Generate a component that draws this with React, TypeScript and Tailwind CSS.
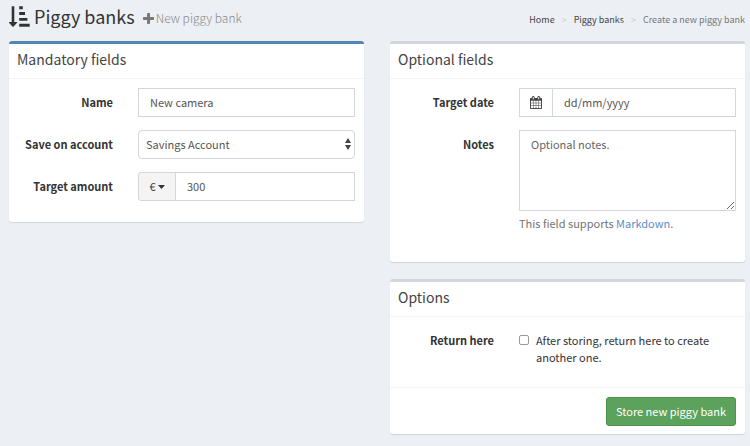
import type { ReactNode } from "react";

const control =
  "block h-[29px] w-full min-w-0 border border-[#d2d6de] bg-white px-[11px] pb-[2px] text-[11px] leading-4 text-[#555] outline-none placeholder:text-[#555]";

function Box({ title, accent, children }: { title: string; accent: string; children: ReactNode }) {
  return (
    <section className={`rounded-[3px] border-t-[3px] bg-white shadow-[0_1px_1px_rgba(0,0,0,0.12)] ${accent}`}>
      <h2 className="border-b border-[#f4f4f4] px-2 pt-[5px] pb-[9px] text-[14px] leading-5 text-[#444]">{title}</h2>
      {children}
    </section>
  );
}

function Row({ label, htmlFor, children }: { label: string; htmlFor: string; children: ReactNode }) {
  return (
    <div className="grid grid-cols-[95px_minmax(0,1fr)] gap-[25px]">
      <label htmlFor={htmlFor} className="pt-[6px] text-right text-[11px] leading-[17px] font-bold whitespace-nowrap text-[#333]">
        {label}
      </label>
      <div>{children}</div>
    </div>
  );
}

function SortIcon() {
  return (
    <svg viewBox="0 0 21 21" className="h-[21px] w-[21px] shrink-0 fill-[#333]" aria-hidden="true">
      <path d="M2.700 0.300h2.600v15.700h2.400q.9 0 .4.800L4.600 20.400q-.6.500-1.200 0L0 16.800q-.5-.8.4-.8H2.700z" />
      <path d="M10.200 0.300h3.600v2.900h-3.600zM10.200 6h5.800v2.900h-5.800zM10.200 11.900h8.200v2.900h-8.200zM10.200 17.800h10.500v2.900H10.200z" />
    </svg>
  );
}

function PlusIcon() {
  return (
    <svg viewBox="0 0 10 10" className="h-[11px] w-[11px] shrink-0 fill-[#777]" aria-hidden="true">
      <path d="M4.3 0h1.5q.6 0 .6.6v3h3q.6 0 .6.6v1.5q0 .6-.6.6h-3v3q0 .6-.6.6H4.3q-.6 0-.6-.6v-3h-3Q0 6.300 0 5.700V4.200q0-.6.7-.6h3v-3Q3.700 0 4.300 0z" />
    </svg>
  );
}

function CalendarIcon() {
  return (
    <svg viewBox="0 0 1664 1792" className="h-[13px] w-3 fill-[#444]" aria-hidden="true">
      <path d="M128 1664h288v-288h-288v288zm352 0h320v-288h-320v288zm-352-352h288v-320h-288v320zm352 0h320v-320h-320v320zm-352-384h288v-288h-288v288zm736 736h320v-288h-320v288zm-384-736h320v-288h-320v288zm768 736h288v-288h-288v288zm-384-352h320v-320h-320v320zm-352-864v-288q0-13-9.500-22.500t-22.500-9.500h-64q-13 0-22.500 9.500t-9.500 22.500v288q0 13 9.500 22.500t22.500 9.500h64q13 0 22.500-9.500t9.500-22.500zm736 864h288v-320h-288v320zm-384-384h320v-288h-320v288zm384 0h288v-288h-288v288zm32-480v-288q0-13-9.500-22.500t-22.500-9.500h-64q-13 0-22.500 9.500t-9.500 22.500v288q0 13 9.500 22.500t22.500 9.500h64q13 0 22.500-9.500t9.500-22.500zm384-64v1280q0 52-38 90t-90 38h-1408q-52 0-90-38t-38-90v-1280q0-52 38-90t90-38h128v-96q0-66 47-113t113-47h64q66 0 113 47t47 113v96h384v-96q0-66 47-113t113-47h64q66 0 113 47t47 113v96h128q52 0 90 38t38 90z" />
    </svg>
  );
}

export default function App() {
  return (
    <div className="min-h-screen bg-[#ecf0f5] pr-[5px] pb-3 pl-[9px] font-['Noto_Sans_CJK_SC','Noto_Sans',sans-serif] text-[11px] leading-[17px] text-[#333]">
      <header className="flex h-[41px] items-start justify-between">
        <div className="flex items-center pt-[2px]">
          <SortIcon />
          <h1 className="ml-1 text-[18px] leading-7">Piggy banks</h1>
          <span className="ml-2 flex items-center gap-[2px] pt-1">
            <PlusIcon />
            <small className="text-[12px] leading-5 font-light text-[#888]">New piggy bank</small>
          </span>
        </div>
        <nav aria-label="Breadcrumb" className="pt-3">
          <ol className="flex text-[9px] leading-4">
            <li><a href="#home" className="text-[#444]">Home</a></li>
            <li aria-hidden="true" className="px-[7px] text-[#ccc]">&gt;</li>
            <li><a href="#piggy-banks" className="text-[#444]">Piggy banks</a></li>
            <li aria-hidden="true" className="px-[7px] text-[#ccc]">&gt;</li>
            <li className="text-[#777]">Create a new piggy bank</li>
          </ol>
        </nav>
      </header>

      <form className="grid grid-cols-2 items-start gap-[26px]">
        <Box title="Mandatory fields" accent="border-[#5485b5]">
          <div className="flex flex-col gap-[13px] px-[9px] pt-[9px] pb-[21px]">
            <Row label="Name" htmlFor="name">
              <input id="name" type="text" defaultValue="New camera" className={control} />
            </Row>
            <Row label="Save on account" htmlFor="account">
              <div className="relative">
                <select id="account" className="block h-[29px] w-full appearance-none rounded-[4px] border border-[#d2d6de] bg-white px-[7px] pb-[2px] text-[11px] leading-4 text-[#555] outline-none">
                  <option>Savings Account</option>
                </select>
                <svg viewBox="0 0 6 12" className="pointer-events-none absolute top-2 right-1 h-3 w-[6px] fill-[#444]" aria-hidden="true">
                  <path d="M3 0l3 5H0zM3 12L0 7h6z" />
                </svg>
              </div>
            </Row>
            <Row label="Target amount" htmlFor="amount">
              <div className="flex">
                <button type="button" aria-label="Currency" className="-mr-px flex h-[29px] w-[38px] shrink-0 items-center justify-center gap-[2px] rounded-l-[3px] border border-[#d2d6de] bg-[#f4f4f4] text-[11px] text-[#444]">
                  €
                  <svg viewBox="0 0 7 4" className="h-1 w-[7px] fill-[#333]" aria-hidden="true">
                    <path d="M0 0h7L3.500 4z" />
                  </svg>
                </button>
                <input id="amount" type="text" defaultValue="300" className={control} />
              </div>
            </Row>
          </div>
        </Box>

        <div className="flex flex-col gap-[17px]">
          <Box title="Optional fields" accent="border-[#d2d6de]">
            <div className="flex flex-col gap-[13px] px-[9px] pt-[9px] pb-[30px]">
              <Row label="Target date" htmlFor="date">
                <div className="flex">
                  <span className="-mr-px flex h-[29px] w-[34px] shrink-0 items-center justify-center border border-[#d2d6de]">
                    <CalendarIcon />
                  </span>
                  <input id="date" type="text" placeholder="dd/mm/yyyy" className={control} />
                </div>
              </Row>
              <Row label="Notes" htmlFor="notes">
                <textarea id="notes" placeholder="Optional notes." className="block h-[81px] w-full resize-y border border-[#d2d6de] bg-white px-[11px] py-[5px] text-[11px] leading-[17px] outline-none placeholder:text-[#666]" />
                <p className="pt-1 text-[#737373]">
                  This field supports <a href="#markdown" className="text-[#5b8ec4]">Markdown</a>.
                </p>
              </Row>
            </div>
          </Box>

          <Box title="Options" accent="border-[#d2d6de]">
            <div className="px-[9px] pt-[9px] pb-[21px]">
              <Row label="Return here" htmlFor="return-here">
                <div className="flex items-start gap-[7px] pt-[6px]">
                  <input id="return-here" type="checkbox" className="mt-[3px] h-[10px] w-[10px] shrink-0 appearance-none rounded-[2px] border border-[#999] bg-white" />
                  <label htmlFor="return-here">After storing, return here to create another one.</label>
                </div>
              </Row>
            </div>
            <div className="flex justify-end border-t border-[#f4f4f4] px-[9px] pt-[9px] pb-2">
              <button type="button" className="h-[29px] rounded-[3px] border border-[#4a934a] bg-[#5ca25c] px-[9px] pb-[2px] text-[11px] leading-4 text-white">
                Store new piggy bank
              </button>
            </div>
          </Box>
        </div>
      </form>
    </div>
  );
}
